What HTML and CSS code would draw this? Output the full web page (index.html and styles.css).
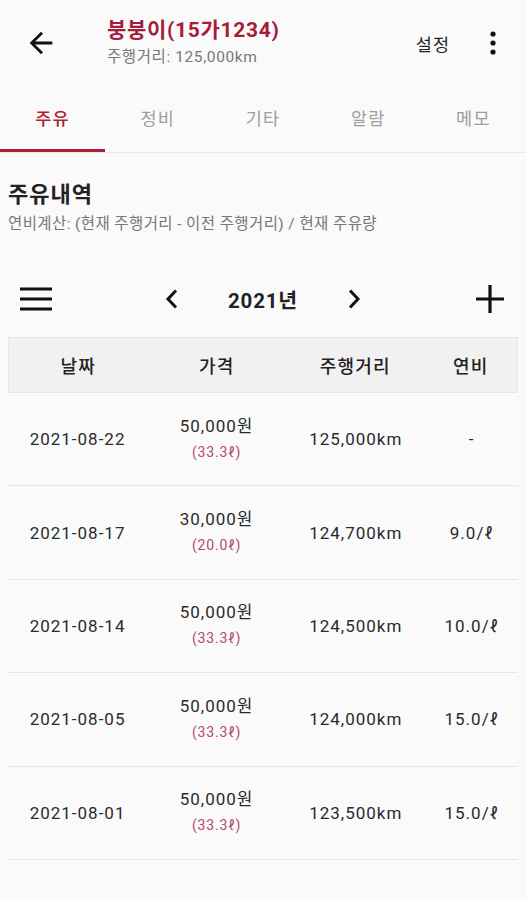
FILE: index.html
```html
<!DOCTYPE html>
<html lang="ko">
<head>
    <meta charset="utf-8" />
    <title>주유내역</title>
    <link rel="stylesheet" href="styles.css">
</head>
<body>
    <header class="appbar">
        <button class="icon-btn back" aria-label="뒤로">
            <svg width="34" height="34" viewBox="0 0 24 24"><path d="M20 11H7.83l5.59-5.59L12 4l-8 8 8 8 1.41-1.41L7.83 13H20v-2z" fill="#111"/></svg>
        </button>
        <div class="titles">
            <div class="title">붕붕이(15가1234)</div>
            <div class="subtitle">주행거리: 125,000km</div>
        </div>
        <span class="action">설정</span>
        <button class="icon-btn more" aria-label="더보기">
            <svg width="24" height="28" viewBox="0 0 24 28"><circle cx="12" cy="5" r="2.6" fill="#111"/><circle cx="12" cy="14" r="2.6" fill="#111"/><circle cx="12" cy="23" r="2.6" fill="#111"/></svg>
        </button>
    </header>

    <nav class="tabs">
        <div class="tab active">주유</div>
        <div class="tab">정비</div>
        <div class="tab">기타</div>
        <div class="tab">알람</div>
        <div class="tab">메모</div>
    </nav>

    <main class="content">
        <h1 class="section-title">주유내역</h1>
        <p class="section-desc">연비계산: (현재 주행거리 - 이전 주행거리) / 현재 주유량</p>

        <div class="toolbar">
            <button class="icon-btn side">
                <svg width="34" height="26" viewBox="0 0 34 26"><path d="M1 3h32M1 13h32M1 23h32" stroke="#111" stroke-width="3"/></svg>
            </button>
            <div class="year-nav">
                <button class="icon-btn">
                    <svg width="24" height="24" viewBox="0 0 24 24"><path d="M16 3.5L8 12l8 8.5" fill="none" stroke="#111" stroke-width="3"/></svg>
                </button>
                <span class="year">2021년</span>
                <button class="icon-btn">
                    <svg width="24" height="24" viewBox="0 0 24 24"><path d="M8 3.5l8 8.5-8 8.5" fill="none" stroke="#111" stroke-width="3"/></svg>
                </button>
            </div>
            <button class="icon-btn side">
                <svg width="30" height="30" viewBox="0 0 30 30"><path d="M15 1v28M1 15h28" stroke="#111" stroke-width="3.2"/></svg>
            </button>
        </div>

        <div class="table">
            <div class="row head">
                <div class="cell">날짜</div>
                <div class="cell">가격</div>
                <div class="cell">주행거리</div>
                <div class="cell small">연비</div>
            </div>
            <div class="row">
                <div class="cell">2021-08-22</div>
                <div class="cell price">50,000원<span class="liters">(33.3ℓ)</span></div>
                <div class="cell">125,000km</div>
                <div class="cell small">-</div>
            </div>
            <div class="row">
                <div class="cell">2021-08-17</div>
                <div class="cell price">30,000원<span class="liters">(20.0ℓ)</span></div>
                <div class="cell">124,700km</div>
                <div class="cell small">9.0/ℓ</div>
            </div>
            <div class="row">
                <div class="cell">2021-08-14</div>
                <div class="cell price">50,000원<span class="liters">(33.3ℓ)</span></div>
                <div class="cell">124,500km</div>
                <div class="cell small">10.0/ℓ</div>
            </div>
            <div class="row">
                <div class="cell">2021-08-05</div>
                <div class="cell price">50,000원<span class="liters">(33.3ℓ)</span></div>
                <div class="cell">124,000km</div>
                <div class="cell small">15.0/ℓ</div>
            </div>
            <div class="row">
                <div class="cell">2021-08-01</div>
                <div class="cell price">50,000원<span class="liters">(33.3ℓ)</span></div>
                <div class="cell">123,500km</div>
                <div class="cell small">15.0/ℓ</div>
            </div>
        </div>
    </main>
</body>
</html>
```

FILE: styles.css
```css
body {
  margin: 0;
  background: #fafafa;
  color: #222;
  font-family: Roboto, "Noto Sans CJK KR", sans-serif;
}
.icon-btn {
  background: none;
  border: none;
  padding: 0;
  display: flex;
  align-items: center;
  justify-content: center;
}

/* App bar */
.appbar {
  height: 86px;
  display: flex;
  align-items: center;
}
.appbar .back {
  margin-left: 24px;
  width: 34px;
}
.titles {
  margin-left: 49px;
  flex: 1;
}
.title {
  font-size: 21px;
  font-weight: bold;
  line-height: 28px;
  color: #a51d3a;
  letter-spacing: 0.7px;
}
.subtitle {
  font-size: 15.5px;
  line-height: 26px;
  color: #777;
  letter-spacing: 0.6px;
}
.action {
  font-size: 17.5px;
  margin-right: 31px;
  letter-spacing: 1px;
}
.appbar .more {
  width: 24px;
  margin-right: 21px;
}

/* Tabs */
.tabs {
  display: flex;
  border-bottom: 1px solid #e8e8e8;
}
.tab {
  flex: 1;
  height: 66px;
  box-sizing: border-box;
  border-bottom: 3px solid transparent;
  display: flex;
  align-items: center;
  justify-content: center;
  font-size: 17.5px;
  letter-spacing: 1.2px;
  color: #9e9e9e;
}
.tab.active {
  color: #ad1f37;
  font-weight: 500;
  border-bottom-color: #ad1f37;
}

/* Content */
.content {
  padding: 0 8px;
}
.section-title {
  margin: 27px 0 0;
  font-size: 22px;
  line-height: 30px;
  font-weight: bold;
  letter-spacing: 1px;
}
.section-desc {
  margin: 2px 0 0;
  font-size: 15.5px;
  line-height: 24px;
  color: #777;
  letter-spacing: 0.4px;
}
.toolbar {
  margin-top: 35px;
  height: 56px;
  padding: 0 4px;
  display: flex;
  align-items: center;
  justify-content: space-between;
}
.toolbar .side {
  width: 48px;
  height: 48px;
}
.year-nav {
  display: flex;
  align-items: center;
  gap: 44px;
}
.year {
  font-size: 20.5px;
  font-weight: bold;
  letter-spacing: 0.8px;
}

/* Table */
.table {
  margin-top: 10px;
}
.row {
  display: flex;
  align-items: center;
  height: 93.4px;
  box-sizing: border-box;
  border-bottom: 1px solid #e6e6e6;
}
.row.head {
  height: 56px;
  background: #f1f1f1;
  border: 1px solid #e6e6e6;
}
.cell {
  flex: 3;
  text-align: center;
  font-size: 17px;
  letter-spacing: 1px;
  color: #2a2a2a;
}
.cell.small {
  flex: 2;
}
.head .cell {
  font-size: 18px;
  font-weight: 500;
  letter-spacing: 1.2px;
  color: #222;
}
.price {
  display: flex;
  flex-direction: column;
  align-items: center;
  line-height: 25px;
}
.liters {
  font-size: 14px;
  line-height: 26px;
  color: #b24a6c;
  letter-spacing: 0.8px;
}
```
